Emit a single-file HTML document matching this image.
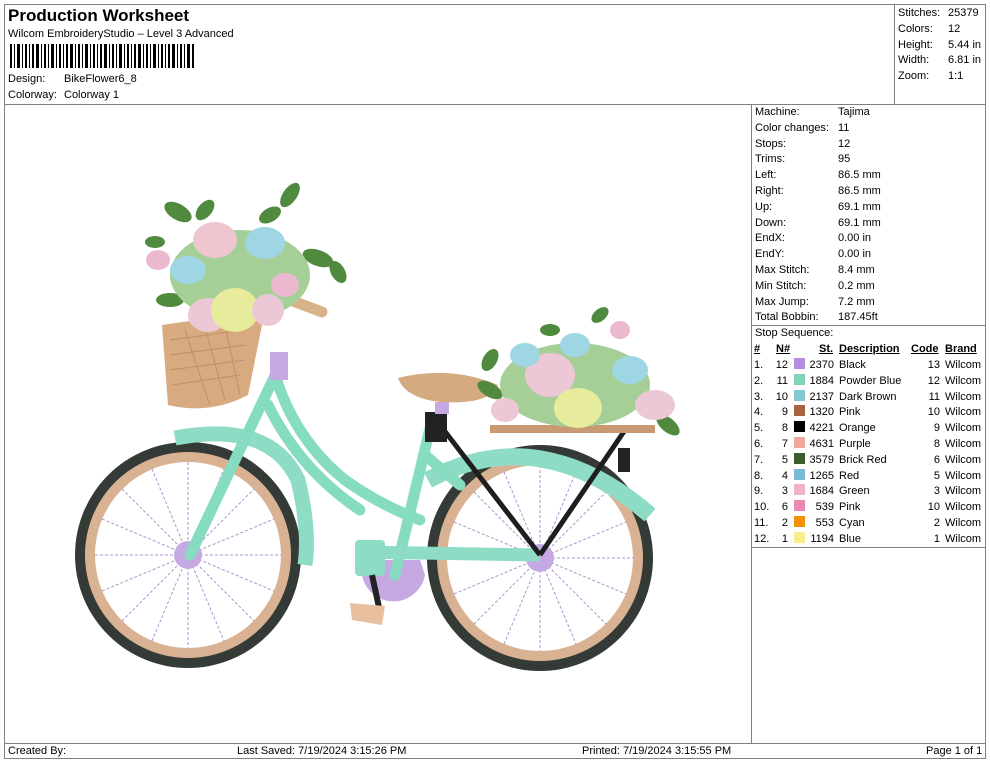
<!DOCTYPE html>
<html><head><meta charset="utf-8"><style>
*{margin:0;padding:0;box-sizing:border-box}
body{width:990px;height:762px;background:#fff;font-family:"Liberation Sans",sans-serif;color:#000;position:relative;overflow:hidden;font-size:11px}
.a{position:absolute;white-space:nowrap}
.ln{position:absolute;background:#808080}
.sw{display:inline-block;width:11px;height:11px;vertical-align:-1px}
</style></head><body>
<div class="ln" style="left:4px;top:4px;width:982px;height:1px"></div>
<div class="ln" style="left:4px;top:4px;width:1px;height:755px"></div>
<div class="ln" style="left:985px;top:4px;width:1px;height:755px"></div>
<div class="ln" style="left:4px;top:104px;width:982px;height:1px"></div>
<div class="ln" style="left:894px;top:4px;width:1px;height:100px"></div>
<div class="ln" style="left:751px;top:104px;width:1px;height:640px"></div>
<div class="ln" style="left:751px;top:325px;width:235px;height:1px"></div>
<div class="ln" style="left:751px;top:547px;width:235px;height:1px"></div>
<div class="ln" style="left:4px;top:743px;width:982px;height:1px"></div>
<div class="ln" style="left:4px;top:758px;width:982px;height:1px"></div>

<div class="a" style="left:8px;top:6px;font-size:17px;font-weight:bold">Production Worksheet</div>
<div class="a" style="left:8px;top:28px">Wilcom EmbroideryStudio – Level 3 Advanced</div>
<svg class="a" style="left:10px;top:44px" width="186" height="24">
<g fill="#000">
<rect x="0" width="2" height="24"/><rect x="4" width="1" height="24"/><rect x="7" width="3" height="24"/><rect x="12" width="1" height="24"/><rect x="15" width="2" height="24"/><rect x="19" width="1" height="24"/><rect x="22" width="2" height="24"/><rect x="26" width="3" height="24"/><rect x="31" width="1" height="24"/><rect x="34" width="2" height="24"/><rect x="38" width="1" height="24"/><rect x="41" width="3" height="24"/><rect x="46" width="1" height="24"/><rect x="49" width="2" height="24"/><rect x="53" width="1" height="24"/><rect x="56" width="2" height="24"/><rect x="60" width="3" height="24"/><rect x="65" width="1" height="24"/><rect x="68" width="2" height="24"/><rect x="72" width="1" height="24"/><rect x="75" width="3" height="24"/><rect x="80" width="1" height="24"/><rect x="83" width="2" height="24"/><rect x="87" width="1" height="24"/><rect x="90" width="2" height="24"/><rect x="94" width="3" height="24"/><rect x="99" width="1" height="24"/><rect x="102" width="2" height="24"/><rect x="106" width="1" height="24"/><rect x="109" width="3" height="24"/><rect x="114" width="1" height="24"/><rect x="117" width="2" height="24"/><rect x="121" width="1" height="24"/><rect x="124" width="2" height="24"/><rect x="128" width="3" height="24"/><rect x="133" width="1" height="24"/><rect x="136" width="2" height="24"/><rect x="140" width="1" height="24"/><rect x="143" width="3" height="24"/><rect x="148" width="1" height="24"/><rect x="151" width="2" height="24"/><rect x="155" width="1" height="24"/><rect x="158" width="2" height="24"/><rect x="162" width="3" height="24"/><rect x="167" width="1" height="24"/><rect x="170" width="2" height="24"/><rect x="174" width="1" height="24"/><rect x="177" width="3" height="24"/><rect x="182" width="2" height="24"/>
</g></svg>
<div class="a" style="left:8px;top:73px">Design:</div><div class="a" style="left:64px;top:73px">BikeFlower6_8</div>
<div class="a" style="left:8px;top:89px">Colorway:</div><div class="a" style="left:64px;top:89px">Colorway 1</div>

<div class="a" style="left:898px;top:6px;line-height:15.8px">Stitches:<br>Colors:<br>Height:<br>Width:<br>Zoom:</div>
<div class="a" style="left:948px;top:6px;line-height:15.8px">25379<br>12<br>5.44 in<br>6.81 in<br>1:1</div>

<div class="a" style="left:755px;top:105px;line-height:15.8px">Machine:<br>Color changes:<br>Stops:<br>Trims:<br>Left:<br>Right:<br>Up:<br>Down:<br>EndX:<br>EndY:<br>Max Stitch:<br>Min Stitch:<br>Max Jump:<br>Total Bobbin:</div>
<div class="a" style="left:838px;top:105px;line-height:15.8px">Tajima<br>11<br>12<br>95<br>86.5 mm<br>86.5 mm<br>69.1 mm<br>69.1 mm<br>0.00 in<br>0.00 in<br>8.4 mm<br>0.2 mm<br>7.2 mm<br>187.45ft</div>

<div class="a" style="left:755px;top:327px">Stop Sequence:</div>
<div class="a" style="left:754px;top:343px;font-weight:bold;text-decoration:underline">#</div>
<div class="a" style="left:776px;top:343px;font-weight:bold;text-decoration:underline">N#</div>
<div class="a" style="left:819px;top:343px;font-weight:bold;text-decoration:underline">St.</div>
<div class="a" style="left:839px;top:343px;font-weight:bold;text-decoration:underline">Description</div>
<div class="a" style="left:911px;top:343px;font-weight:bold;text-decoration:underline">Code</div>
<div class="a" style="left:945px;top:343px;font-weight:bold;text-decoration:underline">Brand</div>
<div class="a" style="left:754px;top:358px;line-height:15.8px">1.<br>2.<br>3.<br>4.<br>5.<br>6.<br>7.<br>8.<br>9.<br>10.<br>11.<br>12.</div>
<div class="a" style="left:772px;top:358px;line-height:15.8px;text-align:right;width:16px">12<br>11<br>10<br>9<br>8<br>7<br>5<br>4<br>3<br>6<br>2<br>1</div>
<div class="a" style="left:794px;top:358px;line-height:15.8px">
<span class="sw" style="background:#b48fe0"></span><br><span class="sw" style="background:#7fd3b8"></span><br><span class="sw" style="background:#86c6cf"></span><br><span class="sw" style="background:#a8633e"></span><br><span class="sw" style="background:#000"></span><br><span class="sw" style="background:#f0a89a"></span><br><span class="sw" style="background:#3d5e2a"></span><br><span class="sw" style="background:#7ab9d6"></span><br><span class="sw" style="background:#f2b3c8"></span><br><span class="sw" style="background:#ea8ab4"></span><br><span class="sw" style="background:#f29200"></span><br><span class="sw" style="background:#f6ef8a"></span></div>
<div class="a" style="left:804px;top:358px;line-height:15.8px;text-align:right;width:30px">2370<br>1884<br>2137<br>1320<br>4221<br>4631<br>3579<br>1265<br>1684<br>539<br>553<br>1194</div>
<div class="a" style="left:839px;top:358px;line-height:15.8px">Black<br>Powder Blue<br>Dark Brown<br>Pink<br>Orange<br>Purple<br>Brick Red<br>Red<br>Green<br>Pink<br>Cyan<br>Blue</div>
<div class="a" style="left:920px;top:358px;line-height:15.8px;text-align:right;width:20px">13<br>12<br>11<br>10<br>9<br>8<br>6<br>5<br>3<br>10<br>2<br>1</div>
<div class="a" style="left:945px;top:358px;line-height:15.8px">Wilcom<br>Wilcom<br>Wilcom<br>Wilcom<br>Wilcom<br>Wilcom<br>Wilcom<br>Wilcom<br>Wilcom<br>Wilcom<br>Wilcom<br>Wilcom</div>

<div class="a" style="left:8px;top:745px">Created By:</div>
<div class="a" style="left:237px;top:745px">Last Saved: 7/19/2024 3:15:26 PM</div>
<div class="a" style="left:582px;top:745px">Printed: 7/19/2024 3:15:55 PM</div>
<div class="a" style="left:926px;top:745px">Page 1 of 1</div>

<svg class="a" style="left:0;top:0" width="750" height="740">
<circle cx="188" cy="555" r="113" fill="#343a35"/>
<circle cx="188" cy="555" r="103" fill="#d9b294"/>
<circle cx="188" cy="555" r="93" fill="#fff"/>
<circle cx="540" cy="558" r="113" fill="#343a35"/>
<circle cx="540" cy="558" r="103" fill="#d9b294"/>
<circle cx="540" cy="558" r="93" fill="#fff"/>
<g stroke="#a995cf" stroke-width="1" stroke-dasharray="3 2">
<path d="M188 462V648M95 555H281M122 489L254 621M122 621L254 489M152 469L224 641M152 641L224 469M102 519L274 591M102 591L274 519"/>
<path d="M540 465V651M447 558H633M474 492L606 624M474 624L606 492M504 472L576 644M504 644L576 472M454 522L626 594M454 594L626 522"/>
</g>
<circle cx="188" cy="555" r="14" fill="#c6a8e3"/>
<circle cx="540" cy="558" r="14" fill="#c6a8e3"/>
<path d="M362 575A32 32 0 0 0 425 575L420 560L365 560Z" fill="#c6a8e3"/>
<path d="M175 438Q270 420 298 480Q310 530 305 565" stroke="#8fdcc6" stroke-width="15" fill="none"/>
<path d="M428 480Q540 420 650 515" stroke="#8fdcc6" stroke-width="17" fill="none"/>
<g stroke="#86dcc0" stroke-width="11" fill="none" stroke-linecap="round">
<path d="M280 365L190 555"/>
<path d="M275 375Q295 440 345 480Q380 505 420 520"/>
<path d="M268 405Q300 470 360 510"/>
<path d="M432 420L395 575"/>
<path d="M425 455L460 485"/>
</g>
<rect x="355" y="540" width="30" height="36" rx="4" fill="#8fdcc6"/>
<path d="M360 552L540 555" stroke="#8fdcc6" stroke-width="13"/>
<path d="M440 425L540 555M625 430L540 555" stroke="#1e1e1e" stroke-width="5"/>
<rect x="425" y="412" width="22" height="30" fill="#222"/>
<rect x="618" y="448" width="12" height="24" fill="#222"/>
<rect x="435" y="402" width="14" height="12" fill="#c6a8e3"/>
<path d="M398 378Q450 365 498 385Q490 405 440 402Q405 398 398 378Z" fill="#d4aa80"/>
<path d="M372 575L380 612" stroke="#222" stroke-width="6"/>
<path d="M350 603L385 606L382 625L352 620Z" fill="#e8c0a0"/>
<rect x="270" y="352" width="18" height="28" fill="#c6a8e3"/>
<path d="M290 300L322 312" stroke="#d8b38a" stroke-width="11" stroke-linecap="round"/>
<path d="M162 325L265 310L248 395Q210 415 168 405Z" fill="#d8aa80"/>
<g stroke="#b07e58" stroke-width="1" opacity=".6">
<path d="M170 340L245 330M170 355L245 345M170 370L245 360M172 385L240 375M185 330L210 405M205 327L225 400M225 325L240 395"/>
</g>
<path d="M490 425L655 425L655 433L490 433Z" fill="#c99a72"/>
<g fill="#4f8a3e">
<ellipse cx="178" cy="212" rx="15" ry="8" transform="rotate(30 178 212)"/>
<ellipse cx="205" cy="210" rx="12" ry="7" transform="rotate(-50 205 210)"/>
<ellipse cx="290" cy="195" rx="14" ry="7" transform="rotate(-55 290 195)"/>
<ellipse cx="270" cy="215" rx="12" ry="7" transform="rotate(-30 270 215)"/>
<ellipse cx="318" cy="258" rx="16" ry="8" transform="rotate(20 318 258)"/>
<ellipse cx="338" cy="272" rx="12" ry="7" transform="rotate(60 338 272)"/>
<ellipse cx="170" cy="300" rx="14" ry="7"/>
<ellipse cx="155" cy="242" rx="10" ry="6"/>
<ellipse cx="490" cy="360" rx="12" ry="7" transform="rotate(-60 490 360)"/>
<ellipse cx="490" cy="390" rx="14" ry="7" transform="rotate(30 490 390)"/>
<ellipse cx="600" cy="315" rx="10" ry="6" transform="rotate(-40 600 315)"/>
<ellipse cx="668" cy="425" rx="14" ry="7" transform="rotate(40 668 425)"/>
<ellipse cx="550" cy="330" rx="10" ry="6"/>
</g>
<ellipse cx="240" cy="275" rx="70" ry="45" fill="#a6cf98"/>
<ellipse cx="215" cy="240" rx="22" ry="18" fill="#efc6cf"/>
<ellipse cx="265" cy="243" rx="20" ry="16" fill="#9fd6e4"/>
<ellipse cx="188" cy="270" rx="18" ry="14" fill="#9fd6e4"/>
<ellipse cx="208" cy="315" rx="20" ry="17" fill="#ecc7d6"/>
<ellipse cx="235" cy="310" rx="24" ry="22" fill="#e6ec9c"/>
<ellipse cx="268" cy="310" rx="16" ry="16" fill="#ecc7d6"/>
<ellipse cx="158" cy="260" rx="12" ry="10" fill="#ecb8cf"/>
<ellipse cx="285" cy="285" rx="14" ry="12" fill="#ecb8cf"/>
<ellipse cx="575" cy="385" rx="75" ry="42" fill="#a6cf98"/>
<ellipse cx="550" cy="375" rx="25" ry="22" fill="#ecc7d6"/>
<ellipse cx="578" cy="408" rx="24" ry="20" fill="#e6ec9c"/>
<ellipse cx="525" cy="355" rx="15" ry="12" fill="#9fd6e4"/>
<ellipse cx="575" cy="345" rx="15" ry="12" fill="#9fd6e4"/>
<ellipse cx="630" cy="370" rx="18" ry="14" fill="#9fd6e4"/>
<ellipse cx="655" cy="405" rx="20" ry="15" fill="#ecc7d6"/>
<ellipse cx="505" cy="410" rx="14" ry="12" fill="#ecc7d6"/>
<ellipse cx="620" cy="330" rx="10" ry="9" fill="#ecb8cf"/>
</svg>
</body></html>
